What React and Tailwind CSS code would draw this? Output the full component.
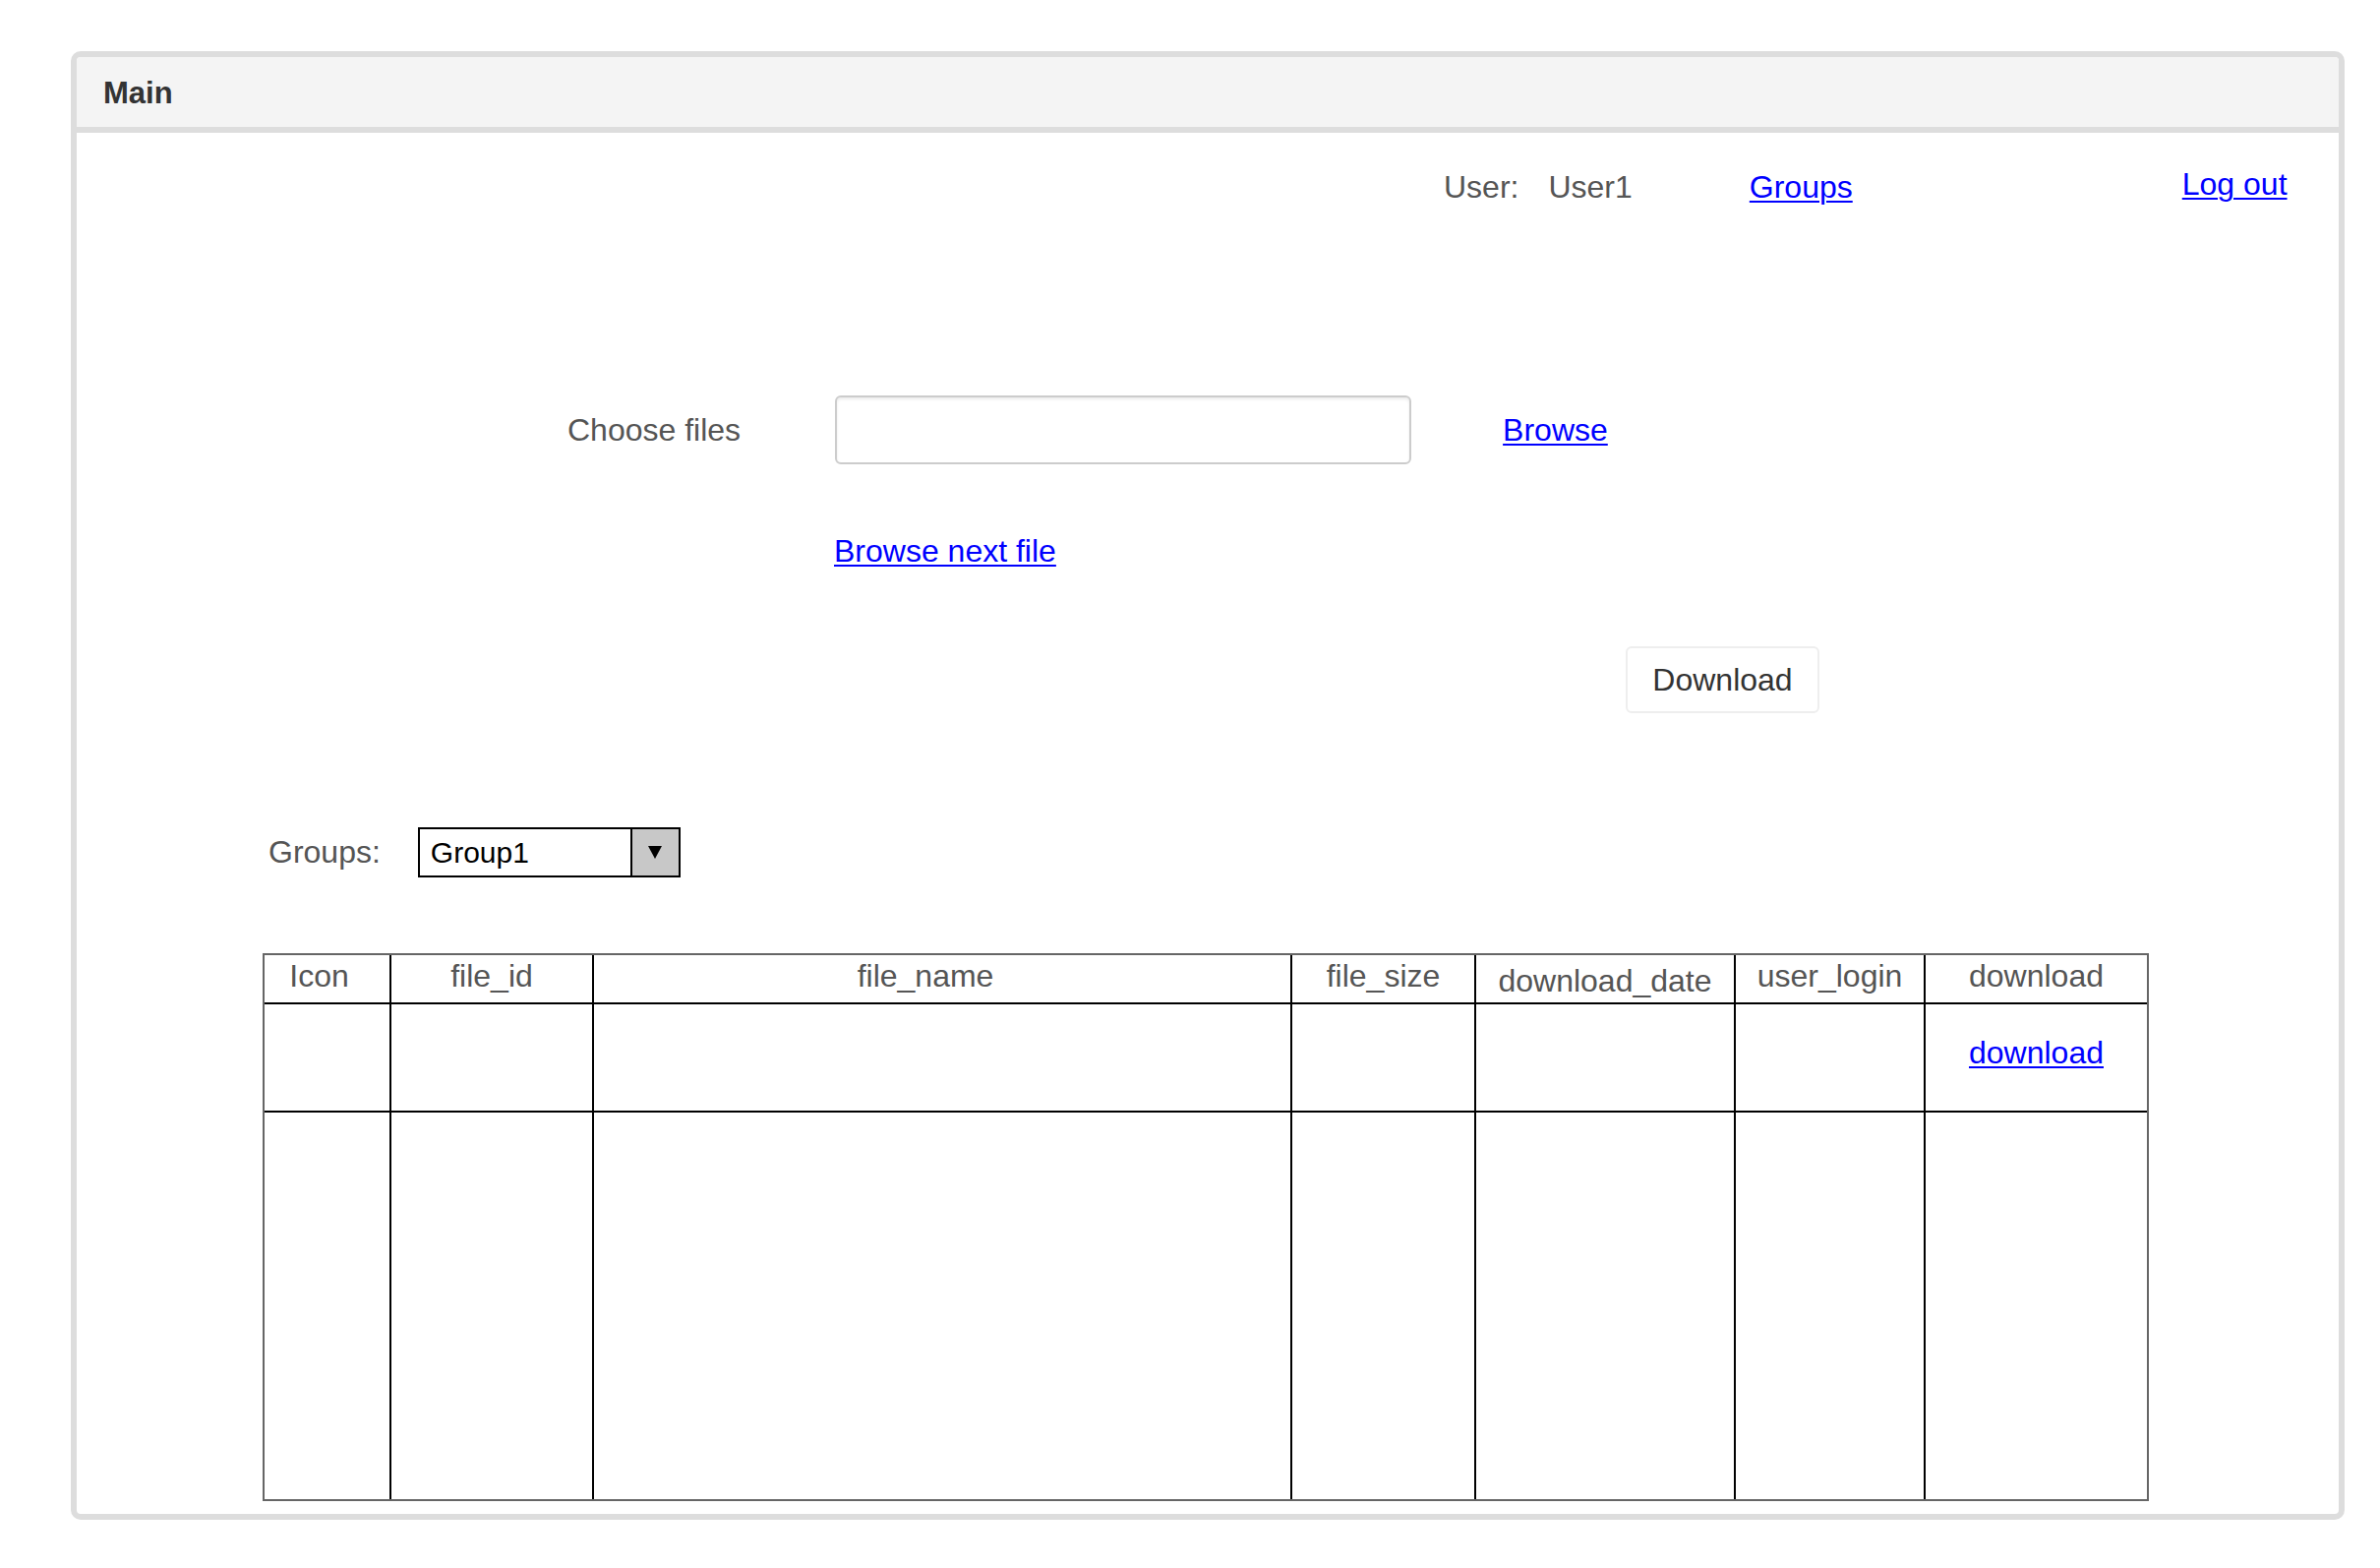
import React from 'react';

const font = { fontFamily: '"Liberation Sans", Arial, Helvetica, sans-serif' };

const columns = [
  { label: 'Icon', className: 'pr-[16px] pb-[5px]' },
  { label: 'file_id', className: 'pb-[5px]' },
  { label: 'file_name', className: 'pr-[34px] pb-[5px]' },
  { label: 'file_size', className: 'pb-[5px]' },
  { label: 'download_date', className: 'pt-[4px]' },
  { label: 'user_login', className: 'pb-[5px]' },
  { label: 'download', className: 'pb-[5px]' },
];

const Link = ({ children, className = '' }) => (
  <a href="#" className={`text-[#0000ff] underline decoration-2 underline-offset-[3px] ${className}`}>
    {children}
  </a>
);

const FilesTable = () => {
  const last = columns.length - 1;
  return (
    <div className="ml-[189px] w-[1918px] border-2 border-[#666] grid grid-cols-[129px_206px_710px_187px_264px_193px_225px] grid-rows-[50px_110px_393px]">
      {/* header row */}
      {columns.map((col, i) => (
        <div
          key={col.label}
          className={`flex items-center justify-center text-[32px] leading-[37px] text-[#555] border-b-2 border-black ${
            i !== last ? 'border-r-2' : ''
          } ${col.className}`}
        >
          {col.label}
        </div>
      ))}
      {/* first data row */}
      {columns.map((col, i) => (
        <div
          key={'r1-' + col.label}
          className={`flex items-center justify-center pb-[10px] border-b-2 border-black ${
            i !== last ? 'border-r-2' : ''
          }`}
        >
          {i === last && <Link className="text-[32px] leading-[37px]">download</Link>}
        </div>
      ))}
      {/* empty space */}
      {columns.map((col, i) => (
        <div key={'r2-' + col.label} className={i !== last ? 'border-r-2 border-black' : ''} />
      ))}
    </div>
  );
};

const App = () => {
  return (
    <div className="min-h-screen bg-white pt-[52px]" style={font}>
      <div className="ml-[72px] w-[2312px] border-[6px] border-[#ddd] rounded-[10px] overflow-hidden">
        <div className="h-[77px] bg-[#f4f4f4] border-b-[6px] border-[#ddd] flex items-center pl-[27px] pt-[3px]">
          <span className="text-[31px] font-bold text-[#333]">Main</span>
        </div>

        <div className="pt-[37px] pb-[13px]">
          {/* user row */}
          <div className="flex items-end h-[37px] text-[32px] leading-[37px]">
            <span className="ml-[1390px] text-[#555]">User:</span>
            <span className="ml-[30px] text-[#555]">User1</span>
            <Link className="ml-[119px]">Groups</Link>
            <Link className="ml-[335px] mb-[3px]">Log out</Link>
          </div>

          {/* choose files */}
          <div className="mt-[193px] flex items-center h-[70px] text-[32px] leading-[37px]">
            <span className="ml-[499px] text-[#555]">Choose files</span>
            <div className="ml-[96px] w-[586px] h-[70px] border-2 border-[#ccc] rounded-[6px] shadow-[inset_0_2px_3px_rgba(0,0,0,0.08)]" />
            <Link className="ml-[93px]">Browse</Link>
          </div>

          {/* browse next file */}
          <div className="mt-[70px] h-[37px] text-[32px] leading-[37px]">
            <Link className="ml-[770px]">Browse next file</Link>
          </div>

          {/* download button */}
          <div className="mt-[78px]">
            <button className="ml-[1575px] w-[197px] h-[68px] border-2 border-[#eee] rounded-[6px] bg-white text-[32px] text-[#333]">
              Download
            </button>
          </div>

          {/* group select */}
          <div className="mt-[116px] flex items-center h-[51px]">
            <span className="ml-[195px] text-[32px] leading-[37px] text-[#555]">Groups:</span>
            <div className="ml-[38px] w-[267px] h-[51px] border-2 border-black flex">
              <div className="flex-1 flex items-center pl-[11px] text-[30px] text-black">Group1</div>
              <div className="w-[49px] border-l-2 border-black bg-[#c8c8c8] flex items-center justify-center">
                <svg width="14" height="13" viewBox="0 0 14 13">
                  <polygon points="0,0 14,0 7,13" fill="#000" />
                </svg>
              </div>
            </div>
          </div>

          {/* table */}
          <div className="mt-[77px]">
            <FilesTable />
          </div>
        </div>
      </div>
    </div>
  );
};

export default App;
